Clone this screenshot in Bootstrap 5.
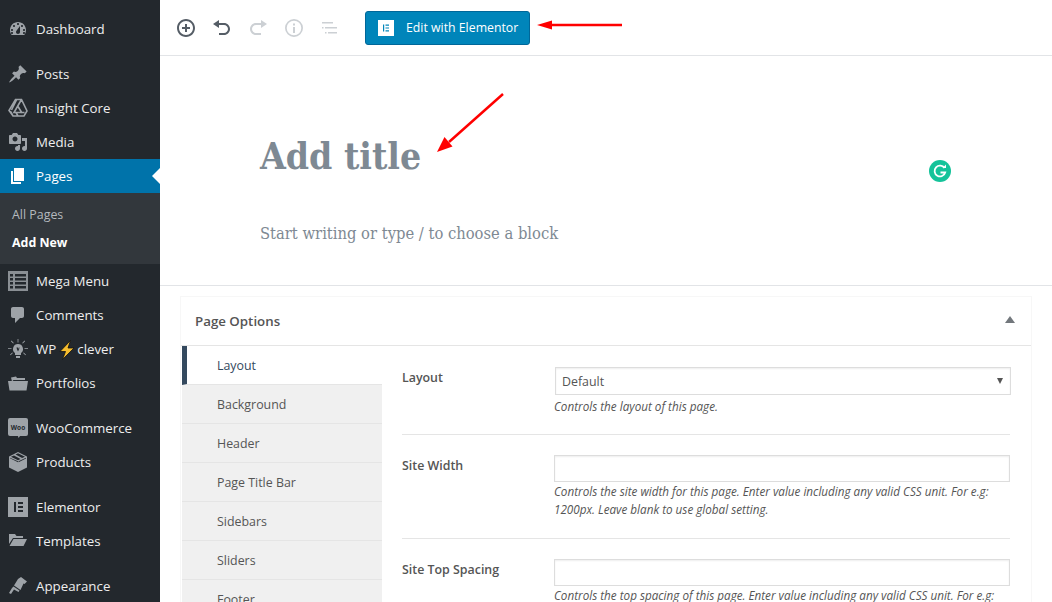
<!DOCTYPE html>
<html lang="en">
<head>
<meta charset="utf-8">
<title>Add New Page</title>
<link href="https://cdn.jsdelivr.net/npm/bootstrap@5.3.0/dist/css/bootstrap.min.css" rel="stylesheet">
<style>
html,body{height:602px;overflow:hidden;background:#fff}
body{font-family:"Open Sans","Noto Sans",sans-serif;font-size:13px;color:#444}
.wp-shell{height:602px;width:1052px;position:relative;overflow:hidden}
.wp-side{width:160px;flex:none;background:#23282d;padding-top:12px;height:602px}
.wp-item{height:34px;display:flex;align-items:center;color:#eee;font-size:13.3px;text-decoration:none;padding-left:8px;padding-top:1px;position:relative}
.wp-item svg{width:20px;height:20px;flex:none;fill:#9ea3a8;margin-right:8px;margin-top:-1px}
.wp-sep{height:11px}
.wp-active{background:#0073aa;color:#fff}
.wp-active svg{fill:#fff}
.wp-active::after{content:"";position:absolute;right:0;top:9px;border:8px solid transparent;border-right-color:#fff;border-left:0}
.wp-sub{background:#32373c;height:71px;padding-top:8px}
.wp-sub a{display:block;height:28px;line-height:28px;padding-left:12px;font-size:12.4px;color:#b4b9be;text-decoration:none}
.wp-sub a.on{color:#fff;font-weight:700}
.wp-item svg.bolt{width:16px;height:20px;margin:0 2px 0 3px;fill:#f5bd2e;stroke:#111;stroke-width:.8}
.wp-top{height:56px;flex:none;border-bottom:1px solid #e2e4e7;padding-left:16px}
.tool{width:20px;height:20px;fill:#555d66;flex:none;margin-right:16px}
.tool.off{fill:#ccd0d4}
.el-btn{background:#0085ba;border:1px solid #006799;color:#fff;height:34px;width:165px;margin-left:9px;border-radius:3px;font-size:12.3px;padding:0 0 0 12px;display:flex;align-items:center;margin-top:1px;white-space:nowrap}
.el-btn:hover{background:#0085ba;color:#fff;border-color:#006799}
.el-ico{width:16px;height:16px;margin-right:12px;flex:none;margin-top:-1px}
.wp-editor{height:230px;flex:none;border-bottom:1px solid #e2e4e7;padding:75px 0 0 100px}
.wp-title{font-family:"DejaVu Serif Condensed","DejaVu Serif",serif;font-stretch:condensed;font-weight:700;font-size:37px;line-height:50px;color:#7e8993;margin:0}
.wp-ph{font-family:"DejaVu Serif Condensed","DejaVu Serif",serif;font-stretch:condensed;font-size:16.4px;line-height:24px;color:#7e8993;margin-top:41px}
.wp-box{margin:10px 20px 0;border:1px solid #f7f7f7;border-bottom:0;height:320px;flex:none}
.box-head{height:49px;border-bottom:1px solid #e5e5e5;padding:2px 16px 0 14px;font-weight:600;color:#555;font-size:13.3px}
.tri{width:0;height:0;border:5px solid transparent;border-bottom:7px solid #72777c;border-top:0;margin-bottom:6px}
.box-tabs{width:200px;flex:none;margin-left:1px}
.box-tab{height:39px;line-height:40px;padding-left:35px;background:#f0f0f0;border-bottom:1px solid #e5e5e5;color:#555;font-size:12.4px;white-space:nowrap}
.box-tab.on{background:#fff;color:#34495e;border-left:5px solid #34495e;padding-left:30px}
.box-body{width:608px;margin-left:20px}
.opt{display:flex;border-bottom:1px solid #e5e5e5}
.opt-l{width:152px;flex:none;font-weight:600;font-size:12.4px;color:#555;margin-top:2px}
.opt-c{flex:1;min-width:0}
.opt-in.form-control,.opt-in.form-select{border:1px solid #ddd;border-radius:0;height:27px;min-height:0;box-shadow:inset 0 1px 2px rgba(0,0,0,.07);font-size:12.4px;color:#555;padding:0 6px}
.opt-in.form-select{height:28px;margin-left:1px;width:456px;background-image:none;padding-top:2px}
.sel-wrap{position:relative}
.sel-wrap::after{content:"";position:absolute;right:7px;top:11px;border:3px solid transparent;border-top:6px solid #555;border-bottom:0}
.hint{font-style:italic;font-size:11.7px;line-height:18px;color:#555}
</style>
</head>
<body>
<div class="wp-shell d-flex">
  <nav class="wp-side">
    <a class="wp-item" href="#"><svg viewBox="0 0 20 20"><path fill-rule="evenodd" d="M3.76 16h12.48c1.1-1.37 1.76-3.11 1.76-5 0-4.42-3.58-8-8-8s-8 3.58-8 8c0 1.89.66 3.63 1.76 5zM10 4c.55 0 1 .45 1 1s-.45 1-1 1-1-.45-1-1 .45-1 1-1zM6 6c.55 0 1 .45 1 1s-.45 1-1 1-1-.45-1-1 .45-1 1-1zm8 0c.55 0 1 .45 1 1s-.45 1-1 1-1-.45-1-1 .45-1 1-1zm-5.37 5.55L12 7v6c0 1.1-.9 2-2 2s-2-.9-2-2c0-.57.24-1.08.63-1.45zM4 10c.55 0 1 .45 1 1s-.45 1-1 1-1-.45-1-1 .45-1 1-1zm12 0c.55 0 1 .45 1 1s-.45 1-1 1-1-.45-1-1 .45-1 1-1zm-12 3c.55 0 1 .45 1 1s-.45 1-1 1-1-.45-1-1 .45-1 1-1zm12 0c.55 0 1 .45 1 1s-.45 1-1 1-1-.45-1-1 .45-1 1-1z"/></svg>Dashboard</a>
    <div class="wp-sep"></div>
    <a class="wp-item" href="#"><svg viewBox="0 0 20 20"><path d="M10.44 3.02l1.82-1.82 6.36 6.35-1.83 1.82c-1.05-.68-2.48-.57-3.41.36l-.75.75c-.92.93-1.04 2.35-.35 3.41l-1.83 1.82-2.41-2.41-2.8 2.79c-.42.42-3.38 2.71-3.8 2.29s1.86-3.39 2.28-3.81l2.79-2.79L4.1 9.36l1.83-1.82c1.05.69 2.48.57 3.4-.36l.75-.75c.93-.92 1.05-2.35.36-3.41z"/></svg>Posts</a>
    <a class="wp-item" href="#"><svg viewBox="0 0 20 20" style="fill:none;stroke:#9ea3a8;stroke-width:1.6"><path d="M7.500 1.500h6L19 13l-3 5H5L1 12.500zM13.500 1.500 6 14.500h10.500M8.500 2 3.500 12M5 18l-2.500-4.500M10 8.500l4 6.500M8 14.500l2 3.500"/></svg>Insight Core</a>
    <a class="wp-item" href="#"><svg viewBox="0 0 20 20"><path fill-rule="evenodd" d="M13 11V4c0-.55-.45-1-1-1h-1.67L9 1H5L3.67 3H2c-.55 0-1 .45-1 1v7c0 .55.45 1 1 1h10c.55 0 1-.45 1-1zM7 4.500c1.380 0 2.500 1.120 2.500 2.500S8.380 9.500 7 9.500 4.500 8.380 4.500 7 5.620 4.500 7 4.500zM14 6h5v10.500c0 1.380-1.120 2.500-2.500 2.500S14 17.880 14 16.500s1.120-2.500 2.500-2.500c.17 0 .34.020.5.050V9h-3V6zm-4 8.050V13h2v3.500c0 1.380-1.120 2.500-2.500 2.500S7 17.880 7 16.500 8.120 14 9.500 14c.17 0 .34.020.5.050z"/></svg>Media</a>
    <a class="wp-item wp-active" href="#"><svg viewBox="0 0 20 20"><path d="M6 15V2h10v13H6zm-1 1h8v2H3V5h2v11z"/></svg>Pages</a>
    <div class="wp-sub"><a href="#">All Pages</a><a class="on" href="#">Add New</a></div>
    <a class="wp-item" href="#"><svg viewBox="0 0 20 20" style="fill:#8a8f94"><path fill-rule="evenodd" d="M0 0h20v20H0zM2 3v2.500h3V3zm5 0v2.500h11V3zM2 7v2.500h3V7zm5 0v2.500h11V7zM2 11v2.500h3V11zm5 0v2.500h11V11zM2 15v2.500h3V15zm5 0v2.500h11V15z"/></svg>Mega Menu</a>
    <a class="wp-item" href="#"><svg viewBox="0 0 20 20"><path d="M5 2h9c1.100 0 2 .9 2 2v7c0 1.100-.9 2-2 2h-2l-5 5v-5H5c-1.100 0-2-.9-2-2V4c0-1.100.9-2 2-2z"/></svg>Comments</a>
    <a class="wp-item" href="#"><svg viewBox="0 0 20 20"><path fill-rule="evenodd" d="M10 5a5 5 0 0 0-3 9v2h6v-2a5 5 0 0 0-3-9zM8.500 8.500l1 4 .5-2 .5 2 1-4h-.7l-.4 1.800-.4-1.800zM8 17h4v2H8zM9.600 0h.8v3.500h-.8zM2.900 2.200l.6-.6 2.300 2.300-.6.6zM16.500 1.600l.6.600-2.300 2.300-.6-.6zM0 9.200h3.500v.8H0zM16.500 9.200H20v.8h-3.500zM2 15.700l2.300-2.300.6.6-2.300 2.300zM15.100 14l.6-.6 2.300 2.300-.6.6z"/></svg>WP<svg class="bolt" viewBox="0 0 16 20"><path d="M11.500.5 1 11.500h5.500L3.500 19.500 15 8H9z"/></svg>clever</a>
    <a class="wp-item" href="#"><svg viewBox="0 0 20 20"><path d="M3 4.500 8 3.500l1 1.500h8v2H5.500L4 8.500zM0 8h20l-1.500 9.500h-17z"/></svg>Portfolios</a>
    <div class="wp-sep"></div>
    <a class="wp-item" href="#"><svg viewBox="0 0 20 20"><path d="M2 0h16a2 2 0 0 1 2 2v14a2 2 0 0 1-2 2h-6l-1.500 2-.5-2H2a2 2 0 0 1-2-2V2a2 2 0 0 1 2-2z"/><text x="10" y="11.500" text-anchor="middle" font-family="Open Sans,sans-serif" font-size="6.500" font-weight="700" style="fill:#23282d">Woo</text></svg>WooCommerce</a>
    <a class="wp-item" href="#"><svg viewBox="0 0 20 20"><path fill-rule="evenodd" d="M10 0l9 4.500v11L10 20l-9-4.500v-11zM3 4.700 10 8.200l2.500-1.300L6 3.400zM7.500 2.600l6.600 3.500L17 4.700 10 1.300zM2 5.700v.5l8 4v-1zM18 5.700l-7.500 3.600v.9l7.500-3.700z"/></svg>Products</a>
    <div class="wp-sep"></div>
    <a class="wp-item" href="#"><svg viewBox="0 0 20 20"><path fill-rule="evenodd" d="M0 0h20v20H0zM6 5v10h2V5zm4 0v2h5V5zm0 4v2h5V9zm0 4v2h5v-2z"/></svg>Elementor</a>
    <a class="wp-item" href="#"><svg viewBox="0 0 20 20"><path d="M1 3h6l1.500 2H15v2H5L1 13zM5.500 8H19l-3.500 7H1.500z"/></svg>Templates</a>
    <div class="wp-sep"></div>
    <a class="wp-item" href="#"><svg viewBox="0 0 20 20"><path d="M10 3 13 1l6 4.500-2.500 2.500-1-.5-3 6.500-6.500-4.500zM5.500 10.500l6 4-1 1.500L6 13.500 3 18l-2-1 3-5z"/></svg>Appearance</a>
  </nav>
  <main class="flex-grow-1 d-flex flex-column" style="min-width:0">
    <div class="wp-top d-flex align-items-center">
      <svg class="tool" viewBox="0 0 20 20"><path d="M10 1c-5 0-9 4-9 9s4 9 9 9 9-4 9-9-4-9-9-9zm0 16c-3.900 0-7-3.100-7-7s3.100-7 7-7 7 3.100 7 7-3.100 7-7 7zm1-11H9v3H6v2h3v3h2v-3h3V9h-3V6z"/></svg>
      <svg class="tool" viewBox="0 0 20 20"><path d="M12 5H7V2L1 6l6 4V7h5c2.200 0 4 1.800 4 4s-1.800 4-4 4H7v2h5c3.300 0 6-2.700 6-6s-2.700-6-6-6z"/></svg>
      <svg class="tool off" viewBox="0 0 20 20"><path d="M8 5h5V2l6 4-6 4V7H8c-2.200 0-4 1.800-4 4s1.800 4 4 4h5v2H8c-3.300 0-6-2.700-6-6s2.700-6 6-6z"/></svg>
      <svg class="tool off" viewBox="0 0 20 20"><path fill-rule="evenodd" d="M10 1a9 9 0 1 0 0 18 9 9 0 0 0 0-18zM10 2.700a7.300 7.300 0 1 1 0 14.600 7.300 7.300 0 0 1 0-14.600zM9 5.500h2v2H9zM9 9h2v6H9z"/></svg>
      <svg class="tool off" viewBox="0 0 20 20"><path d="M2 4h11v1.500H2zM5 9h12v1.500H5zM8 14h9v1.500H8zM2 9h1.500v1.500H2zM5 14h1.500v1.500H5z"/></svg>
      <a class="btn el-btn" href="#"><svg class="el-ico" viewBox="0 0 16 16"><path fill="#fff" d="M0 0h16v16H0z"/><path fill="#0085ba" d="M5 4.500h1.200v7H5zM7.500 4.500h3.500v1.200H7.500zM7.500 7.400h3.500v1.200H7.500zM7.500 10.300h3.500v1.200H7.500z"/></svg>Edit with Elementor</a>
    </div>
    <div class="wp-editor">
      <h1 class="wp-title">Add title</h1>
      <div class="wp-ph">Start writing or type / to choose a block</div>
    </div>
    <section class="wp-box">
      <div class="box-head d-flex align-items-center justify-content-between"><span>Page Options</span><span class="tri"></span></div>
      <div class="d-flex">
        <div class="box-tabs">
          <div class="box-tab on">Layout</div>
          <div class="box-tab">Background</div>
          <div class="box-tab">Header</div>
          <div class="box-tab">Page Title Bar</div>
          <div class="box-tab">Sidebars</div>
          <div class="box-tab">Sliders</div>
          <div class="box-tab">Footer</div>
        </div>
        <div class="box-body">
          <div class="opt" style="height:89px;padding-top:21px">
            <div class="opt-l">Layout</div>
            <div class="opt-c"><div class="sel-wrap"><select class="form-select opt-in"><option>Default</option></select></div><div class="hint" style="margin-top:2px">Controls the layout of this page.</div></div>
          </div>
          <div class="opt" style="height:104px;padding-top:20px">
            <div class="opt-l">Site Width</div>
            <div class="opt-c"><input class="form-control opt-in" type="text" aria-label="Site Width"><div class="hint">Controls the site width for this page. Enter value including any valid CSS unit. For e.g: 1200px. Leave blank to use global setting.</div></div>
          </div>
          <div class="opt border-0" style="padding-top:20px">
            <div class="opt-l">Site Top Spacing</div>
            <div class="opt-c"><input class="form-control opt-in" type="text" aria-label="Site Top Spacing"><div class="hint">Controls the top spacing of this page. Enter value including any valid CSS unit. For e.g:</div></div>
          </div>
        </div>
      </div>
    </section>
  </main>
  <svg class="position-absolute top-0 start-0" width="1052" height="200" viewBox="0 0 1052 200" aria-hidden="true">
    <path d="M622 25H552" stroke="#f00" stroke-width="2.500"/><path d="M537 25l15-4.500v9z" fill="#f00"/>
    <path d="M503 94 449 142" stroke="#f00" stroke-width="2.500"/><path d="M437 152l7.500-15 8 9.500z" fill="#f00"/>
  </svg>
  <svg class="position-absolute" style="left:929px;top:160px" width="22" height="22" viewBox="0 0 22 22" aria-hidden="true"><circle cx="11" cy="11" r="11" fill="#15c39a"/><path d="M15.500 8A5.400 5.400 0 1 0 16.200 12.500H11.500" fill="none" stroke="#fff" stroke-width="1.800"/><path d="M13.500 8h3.500V4.500z" fill="#fff"/></svg>
</div>
<script src="https://cdn.jsdelivr.net/npm/bootstrap@5.3.0/dist/js/bootstrap.bundle.min.js"></script>
</body>
</html>
